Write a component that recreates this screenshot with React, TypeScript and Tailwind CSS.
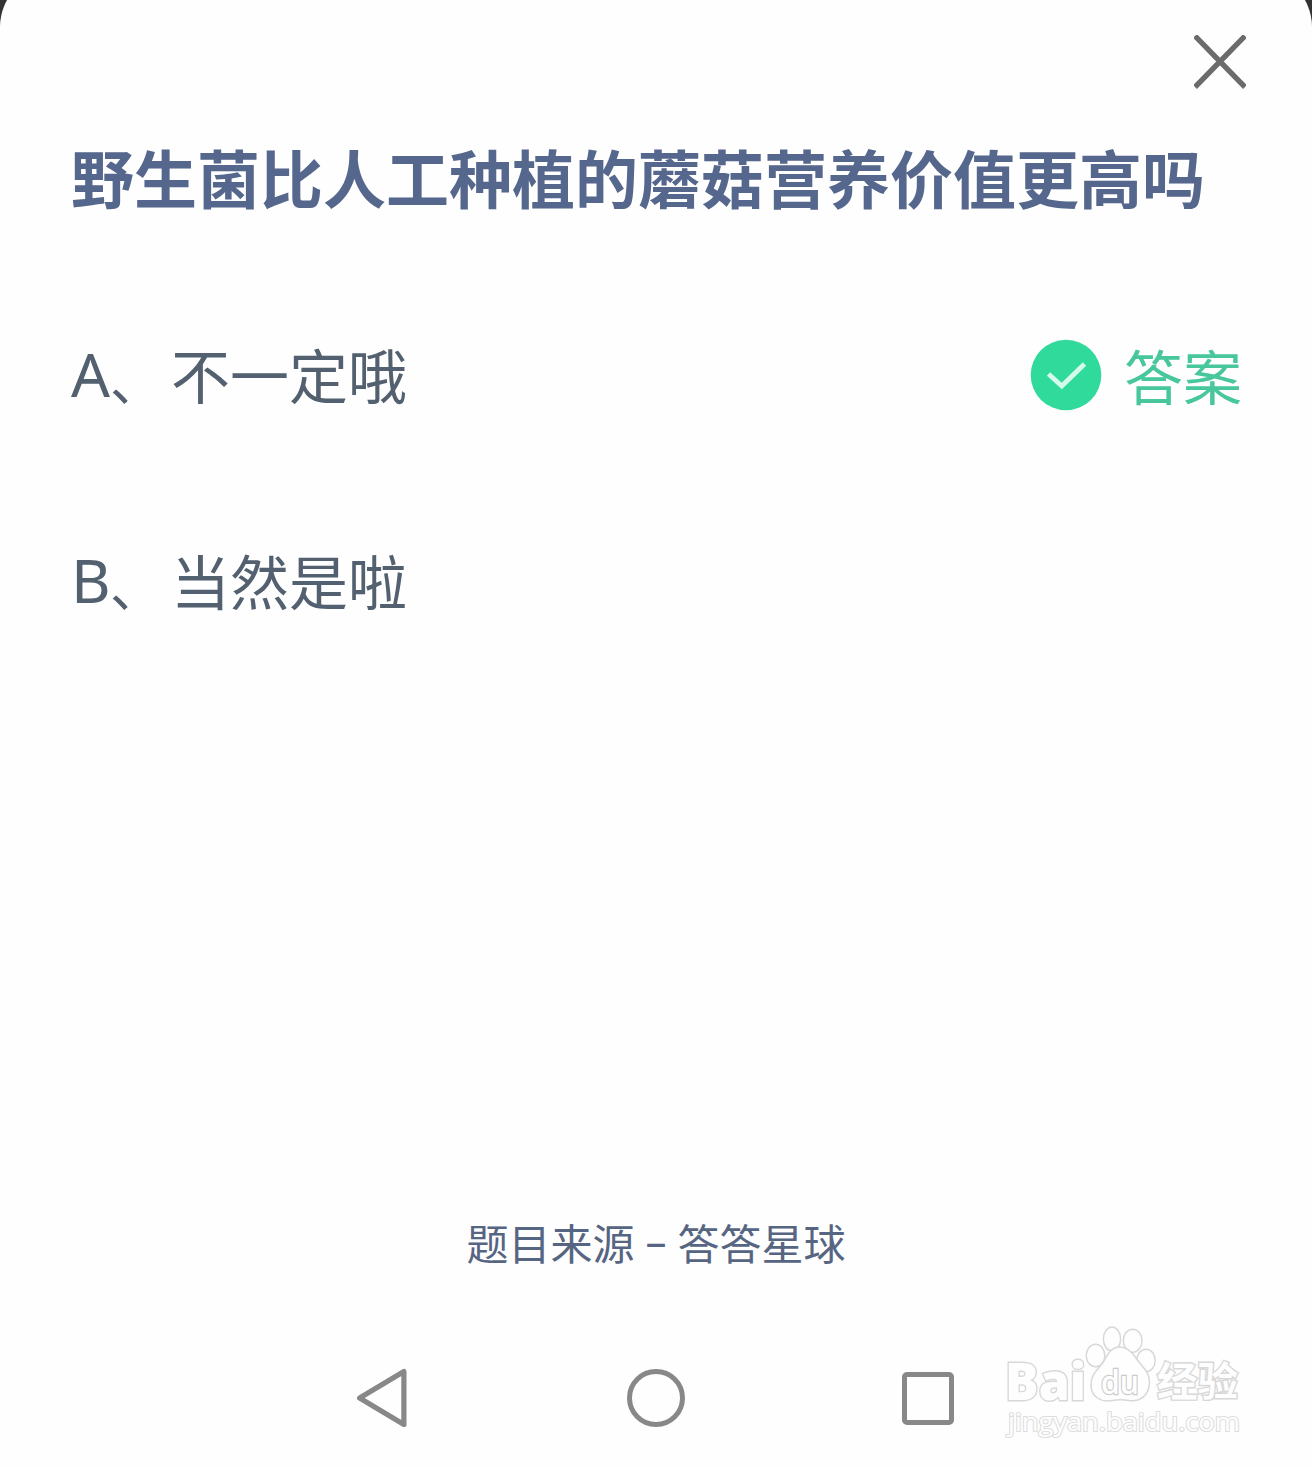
interface Option {
  key: string;
  text: string;
  correct: boolean;
}

const question = '野生菌比人工种植的蘑菇营养价值更高吗';

const options: Option[] = [
  { key: 'A', text: '不一定哦', correct: true },
  { key: 'B', text: '当然是啦', correct: false },
];

function CloseIcon() {
  return (
    <svg viewBox="0 0 52 54" className="w-[52px] h-[54px]" fill="none" stroke="#6b6b6b" strokeWidth="5.4">
      <path d="M1 1 51 52M51 1 1 52" />
    </svg>
  );
}

function CheckBadge() {
  return (
    <svg viewBox="0 0 72 72" className="w-[72px] h-[72px]" fill="none">
      <circle cx="36" cy="36" r="35.3" fill="#2fda9a" />
      <path d="M18.5 35 31.8 47 54.5 25" stroke="#d5fbec" strokeWidth="4.8" />
    </svg>
  );
}

function Watermark() {
  return (
    <svg
      viewBox="0 0 250 130"
      className="absolute right-[62px] bottom-[17px] w-[250px] h-[130px]"
      fill="#fefefe"
      stroke="#d8d8d8"
      strokeWidth="1.5"
    >
      {/* paw */}
      <ellipse cx="95.5" cy="35.5" rx="9.3" ry="11.3" />
      <ellipse cx="112" cy="19" rx="8.6" ry="12" />
      <ellipse cx="132.7" cy="20.7" rx="9.4" ry="11.5" />
      <ellipse cx="146" cy="40.5" rx="9.2" ry="11.3" />
      <g fontFamily="'Open Sans', 'Noto Sans CJK SC', sans-serif" strokeWidth="2.8" paintOrder="stroke">
        <text x="5" y="79.5" fontSize="52" fontWeight="800" textLength="81" lengthAdjust="spacingAndGlyphs">Bai</text>
        <text x="157" y="76" fontSize="40" fontWeight="700" textLength="81" lengthAdjust="spacingAndGlyphs">经验</text>
      </g>
      <path d="M120 27C127 27 132 32 136 38C141 46 149.5 51 149.5 62C149.5 76 139 82 129 80.5C123 79.5 118 79.5 112 80.5C101 82.5 91 77 91 65C91 53 99 49 104 41C108 33 112 27 120 27Z" />
      <text
        x="101"
        y="74"
        fontSize="32"
        fontFamily="'Open Sans', sans-serif"
        fontWeight="600"
        strokeWidth="2.4"
        stroke="#cccccc"
        paintOrder="stroke"
        textLength="38"
        lengthAdjust="spacingAndGlyphs"
      >
        du
      </text>
      <text
        x="8"
        y="110.5"
        fontSize="26"
        fontFamily="'Open Sans', sans-serif"
        fontWeight="500"
        strokeWidth="2.2"
        stroke="#dedede"
        paintOrder="stroke"
        textLength="232"
        lengthAdjust="spacingAndGlyphs"
      >
        jingyan.baidu.com
      </text>
    </svg>
  );
}

export default function App() {
  return (
    <div className="flex h-[1467px] w-[1312px] relative flex-col overflow-hidden bg-[#333333] font-['Noto_Sans','Noto_Sans_CJK_SC',sans-serif]">
      <div className="-mt-[28px] flex grow flex-col rounded-t-[55px] bg-[#fefefe]">
        <div className="flex justify-end pt-[63px] pr-[66px]">
          <button aria-label="关闭">
            <CloseIcon />
          </button>
        </div>

        <h1 className="mt-[45px] pl-[71px] text-[63px] leading-[90px] font-bold whitespace-nowrap text-[#55678c]">
          {question}
        </h1>

        <ul className="mt-[106px] flex flex-col gap-[116px] pr-[70px] pl-[71px] text-[59px] leading-[90px] text-[#53606f]">
          {options.map((o) => (
            <li key={o.key} className="flex h-[90px] items-center justify-between">
              <div className="flex pt-[4px]">
                <span className="w-[39px] text-[61px]">{o.key}</span>
                <span className="w-[61px] pt-[7px] text-[52px]">、</span>
                <span className="pt-[2px]">{o.text}</span>
              </div>
              {o.correct && (
                <div className="flex items-center gap-[22px]">
                  <CheckBadge />
                  <span className="pt-[4px] text-[#48c79c]">答案</span>
                </div>
              )}
            </li>
          ))}
        </ul>

        <p className="mt-auto text-center text-[42px] leading-[60px] text-[#566582]">
          题目来源 <span className="relative -top-[3px]">–</span> 答答星球
        </p>

        <nav className="mt-[93px] mb-[38px] flex h-[62px] items-center pl-[355px]">
          <svg viewBox="0 0 54 62" className="h-[62px] w-[54px]" fill="none" stroke="#888888" strokeWidth="5.2" strokeLinejoin="round">
            <path d="M48.9 4.6V57.4L4.6 31Z" />
          </svg>
          <div className="ml-[218px] h-[58px] w-[58px] rounded-full border-[5px] border-[#888888]" />
          <div className="ml-[217px] h-[53px] w-[52px] rounded-[5px] border-[5px] border-[#888888]" />
        </nav>
      </div>
      <Watermark />
    </div>
  );
}
